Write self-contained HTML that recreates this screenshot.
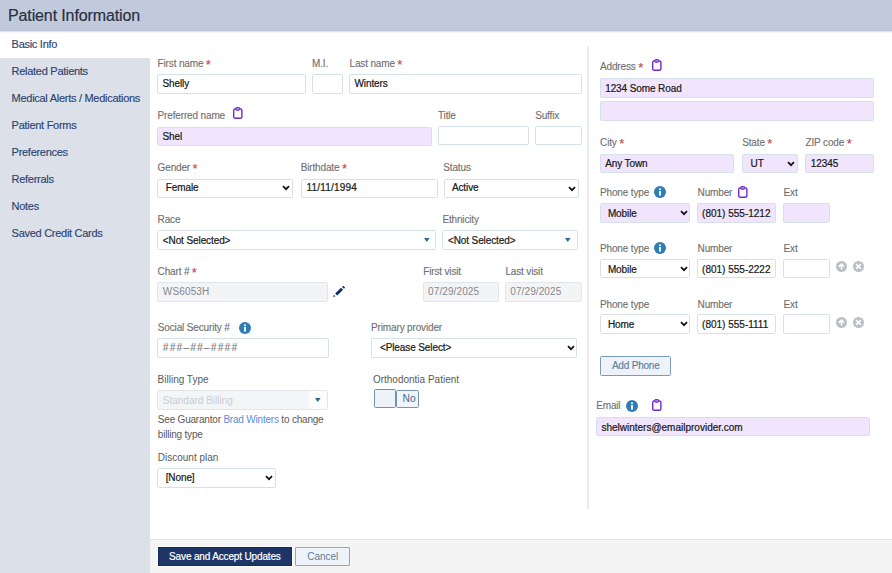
<!DOCTYPE html>
<html><head><meta charset="utf-8"><style>
html,body{margin:0;padding:0;width:892px;height:573px;overflow:hidden;background:#fff;}
body{position:relative;font-family:"Liberation Sans",sans-serif;}
.t{position:absolute;white-space:nowrap;}
.b{position:absolute;box-sizing:border-box;}
</style></head><body>
<div class="b" style="left:0.0px;top:0.0px;width:892.0px;height:31.0px;background:#c1cadc;"></div>
<div class="t" style="left:8.0px;top:7.76px;font-size:16px;line-height:16px;color:#293043;letter-spacing:-0.12px;-webkit-text-stroke:0.2px #293043;">Patient Information</div>
<div class="b" style="left:0.0px;top:31.0px;width:150.0px;height:542.0px;background:#dbe0e9;"></div>
<div class="b" style="left:0.0px;top:31.0px;width:150.0px;height:27.0px;background:#ffffff;"></div>
<div class="t" style="left:11.6px;top:38.89px;font-size:11px;line-height:11px;color:#2d4370;letter-spacing:-0.28px;-webkit-text-stroke:0.15px #2d4370;">Basic Info</div>
<div class="t" style="left:11.6px;top:65.89px;font-size:11px;line-height:11px;color:#2d4370;letter-spacing:-0.28px;-webkit-text-stroke:0.15px #2d4370;">Related Patients</div>
<div class="t" style="left:11.6px;top:92.89px;font-size:11px;line-height:11px;color:#2d4370;letter-spacing:-0.28px;-webkit-text-stroke:0.15px #2d4370;">Medical Alerts / Medications</div>
<div class="t" style="left:11.6px;top:119.89px;font-size:11px;line-height:11px;color:#2d4370;letter-spacing:-0.28px;-webkit-text-stroke:0.15px #2d4370;">Patient Forms</div>
<div class="t" style="left:11.6px;top:146.89px;font-size:11px;line-height:11px;color:#2d4370;letter-spacing:-0.28px;-webkit-text-stroke:0.15px #2d4370;">Preferences</div>
<div class="t" style="left:11.6px;top:173.89px;font-size:11px;line-height:11px;color:#2d4370;letter-spacing:-0.28px;-webkit-text-stroke:0.15px #2d4370;">Referrals</div>
<div class="t" style="left:11.6px;top:200.89px;font-size:11px;line-height:11px;color:#2d4370;letter-spacing:-0.28px;-webkit-text-stroke:0.15px #2d4370;">Notes</div>
<div class="t" style="left:11.6px;top:227.89px;font-size:11px;line-height:11px;color:#2d4370;letter-spacing:-0.28px;-webkit-text-stroke:0.15px #2d4370;">Saved Credit Cards</div>
<div class="b" style="left:150.0px;top:31.0px;width:742.0px;height:508.0px;background:#ffffff;"></div>
<div class="b" style="left:0.0px;top:30.0px;width:892.0px;height:1.0px;background:#bac4d6;"></div>
<div class="b" style="left:0.0px;top:31.0px;width:892.0px;height:1.0px;background:#dfe3eb;"></div>
<div class="b" style="left:0.0px;top:32.0px;width:892.0px;height:1.0px;background:#f6f7fa;"></div>
<div class="b" style="left:150.0px;top:539.0px;width:742.0px;height:34.0px;background:#f4f4f4;border-top:1px solid #e1e3e7;"></div>
<div class="b" style="left:587.0px;top:46.0px;width:2.0px;height:463.0px;background:#ececec;"></div>
<div class="t" style="left:157.6px;top:58.53px;font-size:10px;line-height:10px;color:#6f6f6f;letter-spacing:-0.15px;-webkit-text-stroke:0.12px #6f6f6f;">First name<span style="color:#e03c3c;font-size:13px;margin-left:2.5px;line-height:0;position:relative;top:2px">*</span></div>
<div class="t" style="left:312.0px;top:58.53px;font-size:10px;line-height:10px;color:#6f6f6f;letter-spacing:-0.15px;-webkit-text-stroke:0.12px #6f6f6f;">M.I.</div>
<div class="t" style="left:349.5px;top:58.53px;font-size:10px;line-height:10px;color:#6f6f6f;letter-spacing:-0.15px;-webkit-text-stroke:0.12px #6f6f6f;">Last name<span style="color:#e03c3c;font-size:13px;margin-left:2.5px;line-height:0;position:relative;top:2px">*</span></div>
<div class="b" style="left:157.0px;top:74.0px;width:149.0px;height:20.0px;background:#fff;border:1px solid #d5e0ea;border-radius:1.5px;"></div>
<div class="b" style="left:312.0px;top:74.0px;width:31.0px;height:20.0px;background:#fff;border:1px solid #d5e0ea;border-radius:1.5px;"></div>
<div class="b" style="left:349.0px;top:74.0px;width:233.0px;height:20.0px;background:#fff;border:1px solid #d5e0ea;border-radius:1.5px;"></div>
<div class="t" style="left:162.4px;top:78.73px;font-size:10px;line-height:10px;color:#1a1a1a;letter-spacing:-0.1px;-webkit-text-stroke:0.22px #1a1a1a;">Shelly</div>
<div class="t" style="left:354.5px;top:78.73px;font-size:10px;line-height:10px;color:#1a1a1a;letter-spacing:-0.1px;-webkit-text-stroke:0.22px #1a1a1a;">Winters</div>
<div class="t" style="left:157.6px;top:110.53px;font-size:10px;line-height:10px;color:#6f6f6f;letter-spacing:-0.15px;-webkit-text-stroke:0.12px #6f6f6f;">Preferred name</div>
<svg class="b" style="left:232.9px;top:107.2px" width="11" height="13" viewBox="0 0 11 13"><rect x="0.7" y="1.9" width="8.2" height="9.4" rx="1.6" fill="none" stroke="#6e28d0" stroke-width="1.4"/><rect x="2.4" y="0.5" width="4.6" height="2.8" rx="1.4" fill="#a27ae0" stroke="#6e28d0" stroke-width="1"/></svg>
<div class="t" style="left:438.0px;top:110.53px;font-size:10px;line-height:10px;color:#6f6f6f;letter-spacing:-0.15px;-webkit-text-stroke:0.12px #6f6f6f;">Title</div>
<div class="t" style="left:535.2px;top:110.53px;font-size:10px;line-height:10px;color:#6f6f6f;letter-spacing:-0.15px;-webkit-text-stroke:0.12px #6f6f6f;">Suffix</div>
<div class="b" style="left:157.0px;top:127.0px;width:275.0px;height:19.0px;background:#f1e5fd;border:1px solid #d5e0ea;border-radius:1.5px;"></div>
<div class="b" style="left:438.0px;top:126.2px;width:91.0px;height:19.2px;background:#fff;border:1px solid #d5e0ea;border-radius:1.5px;"></div>
<div class="b" style="left:535.0px;top:126.2px;width:47.0px;height:19.2px;background:#fff;border:1px solid #d5e0ea;border-radius:1.5px;"></div>
<div class="t" style="left:162.4px;top:131.73px;font-size:10px;line-height:10px;color:#1a1a1a;letter-spacing:-0.1px;-webkit-text-stroke:0.22px #1a1a1a;">Shel</div>
<div class="t" style="left:157.6px;top:162.53px;font-size:10px;line-height:10px;color:#6f6f6f;letter-spacing:-0.15px;-webkit-text-stroke:0.12px #6f6f6f;">Gender<span style="color:#e03c3c;font-size:13px;margin-left:2.5px;line-height:0;position:relative;top:2px">*</span></div>
<div class="t" style="left:300.7px;top:162.53px;font-size:10px;line-height:10px;color:#6f6f6f;letter-spacing:-0.15px;-webkit-text-stroke:0.12px #6f6f6f;">Birthdate<span style="color:#e03c3c;font-size:13px;margin-left:2.5px;line-height:0;position:relative;top:2px">*</span></div>
<div class="t" style="left:443.3px;top:162.53px;font-size:10px;line-height:10px;color:#6f6f6f;letter-spacing:-0.15px;-webkit-text-stroke:0.12px #6f6f6f;">Status</div>
<div class="b" style="left:157.0px;top:178.5px;width:136.0px;height:19.5px;background:#fff;border:1px solid #d5e0ea;border-radius:1.5px;"></div>
<div class="b" style="left:300.7px;top:178.5px;width:136.9px;height:19.5px;background:#fff;border:1px solid #d5e0ea;border-radius:1.5px;"></div>
<div class="b" style="left:443.7px;top:178.5px;width:135.0px;height:19.5px;background:#fff;border:1px solid #d5e0ea;border-radius:1.5px;"></div>
<div class="t" style="left:165.8px;top:182.94px;font-size:10px;line-height:10px;color:#1a1a1a;letter-spacing:-0.1px;-webkit-text-stroke:0.22px #1a1a1a;">Female</div>
<svg class="b" style="left:282.2px;top:185.3px" width="8" height="6" viewBox="0 0 8 6"><path d="M1 1.2 L4 4.2 L7 1.2" fill="none" stroke="#111" stroke-width="1.7"/></svg>
<div class="t" style="left:306.4px;top:182.94px;font-size:10px;line-height:10px;color:#1a1a1a;letter-spacing:-0.1px;-webkit-text-stroke:0.22px #1a1a1a;letter-spacing:0.2px;">11/11/1994</div>
<div class="t" style="left:451.9px;top:182.94px;font-size:10px;line-height:10px;color:#1a1a1a;letter-spacing:-0.1px;-webkit-text-stroke:0.22px #1a1a1a;">Active</div>
<svg class="b" style="left:568.0px;top:185.5px" width="8" height="6" viewBox="0 0 8 6"><path d="M1 1.2 L4 4.2 L7 1.2" fill="none" stroke="#111" stroke-width="1.7"/></svg>
<div class="t" style="left:157.6px;top:214.53px;font-size:10px;line-height:10px;color:#6f6f6f;letter-spacing:-0.15px;-webkit-text-stroke:0.12px #6f6f6f;">Race</div>
<div class="t" style="left:442.4px;top:214.53px;font-size:10px;line-height:10px;color:#6f6f6f;letter-spacing:-0.15px;-webkit-text-stroke:0.12px #6f6f6f;">Ethnicity</div>
<div class="b" style="left:157.0px;top:230.2px;width:279.0px;height:19.8px;background:#fff;border:1px solid #d5e0ea;border-radius:1.5px;"></div>
<div class="b" style="left:442.4px;top:230.2px;width:135.6px;height:19.8px;background:#fff;border:1px solid #d5e0ea;border-radius:1.5px;"></div>
<div class="t" style="left:162.8px;top:235.53px;font-size:10px;line-height:10px;color:#1a1a1a;letter-spacing:-0.1px;-webkit-text-stroke:0.22px #1a1a1a;">&lt;Not Selected&gt;</div>
<svg class="b" style="left:423.9px;top:238.3px" width="6" height="4" viewBox="0 0 6 4"><path d="M0 0 L5.6 0 L2.8 3.9 Z" fill="#2c6a93"/></svg>
<div class="t" style="left:447.9px;top:235.53px;font-size:10px;line-height:10px;color:#1a1a1a;letter-spacing:-0.1px;-webkit-text-stroke:0.22px #1a1a1a;">&lt;Not Selected&gt;</div>
<svg class="b" style="left:565.4px;top:238.3px" width="6" height="4" viewBox="0 0 6 4"><path d="M0 0 L5.6 0 L2.8 3.9 Z" fill="#2c6a93"/></svg>
<div class="t" style="left:157.6px;top:266.54px;font-size:10px;line-height:10px;color:#6f6f6f;letter-spacing:-0.15px;-webkit-text-stroke:0.12px #6f6f6f;">Chart #<span style="color:#e03c3c;font-size:13px;margin-left:2.5px;line-height:0;position:relative;top:2px">*</span></div>
<div class="t" style="left:423.2px;top:266.54px;font-size:10px;line-height:10px;color:#6f6f6f;letter-spacing:-0.15px;-webkit-text-stroke:0.12px #6f6f6f;">First visit</div>
<div class="t" style="left:505.4px;top:266.54px;font-size:10px;line-height:10px;color:#6f6f6f;letter-spacing:-0.15px;-webkit-text-stroke:0.12px #6f6f6f;">Last visit</div>
<div class="b" style="left:157.0px;top:282.2px;width:171.0px;height:19.6px;background:#f3f4f6;border:1px solid #e2e5e9;border-radius:1.5px;"></div>
<svg class="b" style="left:333.2px;top:285.6px" width="12" height="11" viewBox="0 0 12 11"><path d="M3.2 8.6 L9.0 2.8" stroke="#0e2b68" stroke-width="2.8"/><path d="M10.0 1.8 L11.2 0.6" stroke="#0e2b68" stroke-width="2.6"/><path d="M0.2 11 L0.9 8.7 L2.5 10.3 Z" fill="#0e2b68"/></svg>
<div class="b" style="left:423.0px;top:282.2px;width:76.0px;height:19.6px;background:#f3f4f6;border:1px solid #e2e5e9;border-radius:1.5px;"></div>
<div class="b" style="left:505.4px;top:282.2px;width:76.3px;height:19.6px;background:#f3f4f6;border:1px solid #e2e5e9;border-radius:1.5px;"></div>
<div class="t" style="left:162.8px;top:286.84px;font-size:10px;line-height:10px;color:#85888d;letter-spacing:0.15px;">WS6053H</div>
<div class="t" style="left:428.1px;top:287.34px;font-size:10px;line-height:10px;color:#85888d;letter-spacing:0.1px;">07/29/2025</div>
<div class="t" style="left:510.3px;top:287.34px;font-size:10px;line-height:10px;color:#85888d;letter-spacing:0.1px;">07/29/2025</div>
<div class="t" style="left:157.8px;top:322.54px;font-size:10px;line-height:10px;color:#6f6f6f;letter-spacing:-0.15px;-webkit-text-stroke:0.12px #6f6f6f;">Social Security #</div>
<svg class="b" style="left:239.2px;top:322.4px" width="12" height="12" viewBox="0 0 12 12"><circle cx="6" cy="6" r="6" fill="#2f7db3"/><rect x="5.1" y="5" width="1.8" height="4.6" fill="#fff"/><circle cx="6" cy="3.2" r="1" fill="#fff"/></svg>
<div class="t" style="left:371.1px;top:322.84px;font-size:10px;line-height:10px;color:#6f6f6f;letter-spacing:-0.15px;-webkit-text-stroke:0.12px #6f6f6f;">Primary provider</div>
<div class="b" style="left:157.2px;top:338.2px;width:171.6px;height:19.4px;background:#fff;border:1px solid #d5e0ea;border-radius:1.5px;"></div>
<div class="b" style="left:371.1px;top:338.2px;width:206.1px;height:19.5px;background:#fff;border:1px solid #d5e0ea;border-radius:1.5px;"></div>
<div class="t" style="left:162.8px;top:343.14px;font-size:10px;line-height:10px;color:#7c7c7c;font-style:italic;letter-spacing:1.3px;-webkit-text-stroke:0.15px #7c7c7c;">###&#8211;##&#8211;####</div>
<div class="t" style="left:379.9px;top:343.24px;font-size:10px;line-height:10px;color:#1a1a1a;letter-spacing:-0.1px;-webkit-text-stroke:0.22px #1a1a1a;">&lt;Please Select&gt;</div>
<svg class="b" style="left:566.7px;top:345.3px" width="8" height="6" viewBox="0 0 8 6"><path d="M1 1.2 L4 4.2 L7 1.2" fill="none" stroke="#111" stroke-width="1.7"/></svg>
<div class="t" style="left:157.6px;top:375.34px;font-size:10px;line-height:10px;color:#5a5a5a;">Billing Type</div>
<div class="t" style="left:372.9px;top:374.84px;font-size:10px;line-height:10px;color:#5a5a5a;">Orthodontia Patient</div>
<div class="b" style="left:157.2px;top:390.2px;width:170.7px;height:19.5px;background:#f3f5f7;border:1px solid #e2e5e9;border-radius:1.5px;"></div>
<div class="b" style="left:308.7px;top:391.2px;width:18.2px;height:17.5px;background:#fdfdfe;"></div>
<svg class="b" style="left:315.0px;top:398.2px" width="6" height="4" viewBox="0 0 6 4"><path d="M0 0 L5.6 0 L2.8 3.9 Z" fill="#2c6a93"/></svg>
<div class="t" style="left:162.8px;top:396.14px;font-size:10px;line-height:10px;color:#c9cdd2;">Standard Billing</div>
<div class="b" style="left:395.8px;top:390.2px;width:23.0px;height:17.4px;background:#f1f4fa;border:1px solid #7396b0;border-radius:1.5px;border-radius:1.5px;"></div>
<div class="b" style="left:374.2px;top:389.2px;width:22.1px;height:19.3px;background:#eef2f9;border:1px solid #6f93ad;border-radius:1.5px;border-radius:1.5px;"></div>
<div class="t" style="left:402.5px;top:393.94px;font-size:10px;line-height:10px;color:#46698a;font-size:10.3px;">No</div>
<div class="t" style="left:157.8px;top:414.54px;font-size:10px;line-height:10px;color:#585858;letter-spacing:-0.2px">See Guarantor <span style="color:#5a8ee0">Brad Winters</span> to change</div>
<div class="t" style="left:157.8px;top:429.54px;font-size:10px;line-height:10px;color:#585858;letter-spacing:-0.2px">billing type</div>
<div class="t" style="left:157.8px;top:453.24px;font-size:10px;line-height:10px;color:#5a5a5a;">Discount plan</div>
<div class="b" style="left:157.2px;top:468.0px;width:118.4px;height:19.8px;background:#fff;border:1px solid #d5e0ea;border-radius:1.5px;"></div>
<div class="t" style="left:165.7px;top:472.84px;font-size:10px;line-height:10px;color:#1a1a1a;letter-spacing:-0.1px;-webkit-text-stroke:0.22px #1a1a1a;">[None]</div>
<svg class="b" style="left:265.0px;top:474.5px" width="8" height="6" viewBox="0 0 8 6"><path d="M1 1.2 L4 4.2 L7 1.2" fill="none" stroke="#111" stroke-width="1.7"/></svg>
<div class="t" style="left:600.0px;top:62.13px;font-size:10px;line-height:10px;color:#6f6f6f;letter-spacing:-0.15px;-webkit-text-stroke:0.12px #6f6f6f;">Address<span style="color:#e03c3c;font-size:13px;margin-left:2.5px;line-height:0;position:relative;top:2px">*</span></div>
<svg class="b" style="left:651.8px;top:59.2px" width="11" height="13" viewBox="0 0 11 13"><rect x="0.7" y="1.9" width="8.2" height="9.4" rx="1.6" fill="none" stroke="#6e28d0" stroke-width="1.4"/><rect x="2.4" y="0.5" width="4.6" height="2.8" rx="1.4" fill="#a27ae0" stroke="#6e28d0" stroke-width="1"/></svg>
<div class="b" style="left:599.8px;top:78.0px;width:274.0px;height:20.0px;background:#f1e5fd;border:1px solid #d5e0ea;border-radius:1.5px;"></div>
<div class="b" style="left:599.8px;top:101.0px;width:274.0px;height:20.0px;background:#f1e5fd;border:1px solid #d5e0ea;border-radius:1.5px;"></div>
<div class="t" style="left:605.2px;top:83.53px;font-size:10px;line-height:10px;color:#1a1a1a;letter-spacing:-0.1px;-webkit-text-stroke:0.22px #1a1a1a;">1234 Some Road</div>
<div class="t" style="left:600.1px;top:138.23px;font-size:10px;line-height:10px;color:#6f6f6f;letter-spacing:-0.15px;-webkit-text-stroke:0.12px #6f6f6f;">City<span style="color:#e03c3c;font-size:13px;margin-left:2.5px;line-height:0;position:relative;top:2px">*</span></div>
<div class="t" style="left:742.2px;top:138.03px;font-size:10px;line-height:10px;color:#6f6f6f;letter-spacing:-0.15px;-webkit-text-stroke:0.12px #6f6f6f;">State<span style="color:#e03c3c;font-size:13px;margin-left:2.5px;line-height:0;position:relative;top:2px">*</span></div>
<div class="t" style="left:805.5px;top:138.03px;font-size:10px;line-height:10px;color:#6f6f6f;letter-spacing:-0.15px;-webkit-text-stroke:0.12px #6f6f6f;">ZIP code<span style="color:#e03c3c;font-size:13px;margin-left:2.5px;line-height:0;position:relative;top:2px">*</span></div>
<div class="b" style="left:600.0px;top:154.0px;width:134.4px;height:18.8px;background:#f1e5fd;border:1px solid #d5e0ea;border-radius:1.5px;"></div>
<div class="b" style="left:742.2px;top:154.0px;width:55.4px;height:18.8px;background:#f1e5fd;border:1px solid #d5e0ea;border-radius:1.5px;"></div>
<div class="b" style="left:805.1px;top:154.0px;width:68.7px;height:18.8px;background:#f1e5fd;border:1px solid #d5e0ea;border-radius:1.5px;"></div>
<div class="t" style="left:605.2px;top:158.63px;font-size:10px;line-height:10px;color:#1a1a1a;letter-spacing:-0.1px;-webkit-text-stroke:0.22px #1a1a1a;">Any Town</div>
<div class="t" style="left:750.6px;top:158.73px;font-size:10px;line-height:10px;color:#1a1a1a;letter-spacing:-0.1px;-webkit-text-stroke:0.22px #1a1a1a;">UT</div>
<svg class="b" style="left:786.8px;top:160.8px" width="8" height="6" viewBox="0 0 8 6"><path d="M1 1.2 L4 4.2 L7 1.2" fill="none" stroke="#111" stroke-width="1.7"/></svg>
<div class="t" style="left:810.8px;top:158.73px;font-size:10px;line-height:10px;color:#1a1a1a;letter-spacing:-0.1px;-webkit-text-stroke:0.22px #1a1a1a;">12345</div>
<div class="t" style="left:600.0px;top:187.63px;font-size:10px;line-height:10px;color:#6f6f6f;letter-spacing:-0.15px;-webkit-text-stroke:0.12px #6f6f6f;">Phone type</div>
<svg class="b" style="left:654.3px;top:185.9px" width="12" height="12" viewBox="0 0 12 12"><circle cx="6" cy="6" r="6" fill="#2f7db3"/><rect x="5.1" y="5" width="1.8" height="4.6" fill="#fff"/><circle cx="6" cy="3.2" r="1" fill="#fff"/></svg>
<div class="t" style="left:697.6px;top:187.63px;font-size:10px;line-height:10px;color:#6f6f6f;letter-spacing:-0.15px;-webkit-text-stroke:0.12px #6f6f6f;">Number</div>
<svg class="b" style="left:738.4px;top:185.6px" width="11" height="13" viewBox="0 0 11 13"><rect x="0.7" y="1.9" width="8.2" height="9.4" rx="1.6" fill="none" stroke="#6e28d0" stroke-width="1.4"/><rect x="2.4" y="0.5" width="4.6" height="2.8" rx="1.4" fill="#a27ae0" stroke="#6e28d0" stroke-width="1"/></svg>
<div class="t" style="left:783.6px;top:187.63px;font-size:10px;line-height:10px;color:#6f6f6f;letter-spacing:-0.15px;-webkit-text-stroke:0.12px #6f6f6f;">Ext</div>
<div class="b" style="left:600.0px;top:203.2px;width:90.2px;height:19.5px;background:#f1e5fd;border:1px solid #d5e0ea;border-radius:1.5px;"></div>
<div class="b" style="left:697.1px;top:203.2px;width:78.7px;height:19.5px;background:#f1e5fd;border:1px solid #d5e0ea;border-radius:1.5px;"></div>
<div class="b" style="left:783.1px;top:203.2px;width:46.6px;height:19.5px;background:#f1e5fd;border:1px solid #d5e0ea;border-radius:1.5px;"></div>
<div class="t" style="left:607.9px;top:208.53px;font-size:10px;line-height:10px;color:#1a1a1a;letter-spacing:-0.1px;-webkit-text-stroke:0.22px #1a1a1a;">Mobile</div>
<svg class="b" style="left:679.6px;top:210.4px" width="8" height="6" viewBox="0 0 8 6"><path d="M1 1.2 L4 4.2 L7 1.2" fill="none" stroke="#111" stroke-width="1.7"/></svg>
<div class="t" style="left:702.1px;top:208.53px;font-size:10px;line-height:10px;color:#1a1a1a;letter-spacing:-0.1px;-webkit-text-stroke:0.22px #1a1a1a;letter-spacing:0px;">(801) 555-1212</div>
<div class="t" style="left:600.0px;top:243.73px;font-size:10px;line-height:10px;color:#6f6f6f;letter-spacing:-0.15px;-webkit-text-stroke:0.12px #6f6f6f;">Phone type</div>
<svg class="b" style="left:654.3px;top:242.0px" width="12" height="12" viewBox="0 0 12 12"><circle cx="6" cy="6" r="6" fill="#2f7db3"/><rect x="5.1" y="5" width="1.8" height="4.6" fill="#fff"/><circle cx="6" cy="3.2" r="1" fill="#fff"/></svg>
<div class="t" style="left:697.6px;top:243.73px;font-size:10px;line-height:10px;color:#6f6f6f;letter-spacing:-0.15px;-webkit-text-stroke:0.12px #6f6f6f;">Number</div>
<div class="t" style="left:783.6px;top:243.73px;font-size:10px;line-height:10px;color:#6f6f6f;letter-spacing:-0.15px;-webkit-text-stroke:0.12px #6f6f6f;">Ext</div>
<div class="b" style="left:600.0px;top:258.8px;width:90.2px;height:19.6px;background:#fff;border:1px solid #d5e0ea;border-radius:1.5px;"></div>
<div class="b" style="left:697.1px;top:258.8px;width:78.7px;height:19.6px;background:#fff;border:1px solid #d5e0ea;border-radius:1.5px;"></div>
<div class="b" style="left:783.1px;top:258.8px;width:46.6px;height:19.6px;background:#fff;border:1px solid #d5e0ea;border-radius:1.5px;"></div>
<div class="t" style="left:607.9px;top:265.14px;font-size:10px;line-height:10px;color:#1a1a1a;letter-spacing:-0.1px;-webkit-text-stroke:0.22px #1a1a1a;">Mobile</div>
<svg class="b" style="left:679.6px;top:266.0px" width="8" height="6" viewBox="0 0 8 6"><path d="M1 1.2 L4 4.2 L7 1.2" fill="none" stroke="#111" stroke-width="1.7"/></svg>
<div class="t" style="left:702.1px;top:265.14px;font-size:10px;line-height:10px;color:#1a1a1a;letter-spacing:-0.1px;-webkit-text-stroke:0.22px #1a1a1a;letter-spacing:0px;">(801) 555-2222</div>
<svg class="b" style="left:835.8px;top:261.2px" width="11" height="11" viewBox="0 0 11 11"><circle cx="5.5" cy="5.5" r="5.5" fill="#bcc0c4"/><path d="M5.5 8.6 V3.2 M2.9 5.6 L5.5 3 L8.1 5.6" fill="none" stroke="#fff" stroke-width="1.5"/></svg>
<svg class="b" style="left:852.6px;top:261.2px" width="11" height="11" viewBox="0 0 11 11"><circle cx="5.5" cy="5.5" r="5.5" fill="#bcc0c4"/><path d="M3.1 3.1 L7.9 7.9 M7.9 3.1 L3.1 7.9" fill="none" stroke="#fff" stroke-width="1.5"/></svg>
<div class="t" style="left:600.0px;top:299.64px;font-size:10px;line-height:10px;color:#6f6f6f;letter-spacing:-0.15px;-webkit-text-stroke:0.12px #6f6f6f;">Phone type</div>
<div class="t" style="left:697.6px;top:299.64px;font-size:10px;line-height:10px;color:#6f6f6f;letter-spacing:-0.15px;-webkit-text-stroke:0.12px #6f6f6f;">Number</div>
<div class="t" style="left:783.6px;top:299.64px;font-size:10px;line-height:10px;color:#6f6f6f;letter-spacing:-0.15px;-webkit-text-stroke:0.12px #6f6f6f;">Ext</div>
<div class="b" style="left:600.0px;top:314.1px;width:90.2px;height:19.6px;background:#fff;border:1px solid #d5e0ea;border-radius:1.5px;"></div>
<div class="b" style="left:697.1px;top:314.1px;width:78.7px;height:19.6px;background:#fff;border:1px solid #d5e0ea;border-radius:1.5px;"></div>
<div class="b" style="left:783.1px;top:314.1px;width:46.6px;height:19.6px;background:#fff;border:1px solid #d5e0ea;border-radius:1.5px;"></div>
<div class="t" style="left:607.9px;top:320.04px;font-size:10px;line-height:10px;color:#1a1a1a;letter-spacing:-0.1px;-webkit-text-stroke:0.22px #1a1a1a;">Home</div>
<svg class="b" style="left:679.6px;top:321.3px" width="8" height="6" viewBox="0 0 8 6"><path d="M1 1.2 L4 4.2 L7 1.2" fill="none" stroke="#111" stroke-width="1.7"/></svg>
<div class="t" style="left:702.1px;top:320.04px;font-size:10px;line-height:10px;color:#1a1a1a;letter-spacing:-0.1px;-webkit-text-stroke:0.22px #1a1a1a;letter-spacing:0px;">(801) 555-1111</div>
<svg class="b" style="left:835.8px;top:316.5px" width="11" height="11" viewBox="0 0 11 11"><circle cx="5.5" cy="5.5" r="5.5" fill="#bcc0c4"/><path d="M5.5 8.6 V3.2 M2.9 5.6 L5.5 3 L8.1 5.6" fill="none" stroke="#fff" stroke-width="1.5"/></svg>
<svg class="b" style="left:852.6px;top:316.5px" width="11" height="11" viewBox="0 0 11 11"><circle cx="5.5" cy="5.5" r="5.5" fill="#bcc0c4"/><path d="M3.1 3.1 L7.9 7.9 M7.9 3.1 L3.1 7.9" fill="none" stroke="#fff" stroke-width="1.5"/></svg>
<div class="b" style="left:599.6px;top:356.1px;width:71.3px;height:19.7px;background:#eef2fa;border:1px solid #7b9ab6;border-radius:1.5px;"></div>
<div class="t" style="left:611.9px;top:360.94px;font-size:10px;line-height:10px;color:#5f7e9c;letter-spacing:-0.2px;-webkit-text-stroke:0.15px #5f7e9c;">Add Phone</div>
<div class="t" style="left:596.2px;top:400.94px;font-size:10px;line-height:10px;color:#6f6f6f;letter-spacing:-0.15px;-webkit-text-stroke:0.12px #6f6f6f;">Email</div>
<svg class="b" style="left:625.8px;top:400.0px" width="12" height="12" viewBox="0 0 12 12"><circle cx="6" cy="6" r="6" fill="#2f7db3"/><rect x="5.1" y="5" width="1.8" height="4.6" fill="#fff"/><circle cx="6" cy="3.2" r="1" fill="#fff"/></svg>
<svg class="b" style="left:652.3px;top:398.9px" width="11" height="13" viewBox="0 0 11 13"><rect x="0.7" y="1.9" width="8.2" height="9.4" rx="1.6" fill="none" stroke="#6e28d0" stroke-width="1.4"/><rect x="2.4" y="0.5" width="4.6" height="2.8" rx="1.4" fill="#a27ae0" stroke="#6e28d0" stroke-width="1"/></svg>
<div class="b" style="left:596.2px;top:417.0px;width:273.7px;height:18.9px;background:#f1e5fd;border:1px solid #d5e0ea;border-radius:1.5px;"></div>
<div class="t" style="left:601.4px;top:422.54px;font-size:10px;line-height:10px;color:#1a1a1a;letter-spacing:-0.1px;-webkit-text-stroke:0.22px #1a1a1a;letter-spacing:0px;">shelwinters@emailprovider.com</div>
<div class="b" style="left:157.6px;top:546.8px;width:134.6px;height:19.2px;background:#1d3567;border:1px solid #122b5d;border-radius:1.5px;border-radius:0;box-shadow:0 0 0 1px #fff;"></div>
<div class="t" style="left:169.1px;top:552.13px;font-size:10px;line-height:10px;color:#ffffff;letter-spacing:-0.15px;-webkit-text-stroke:0.2px #fff;">Save and Accept Updates</div>
<div class="b" style="left:295.4px;top:546.8px;width:54.2px;height:19.2px;background:#eef3fa;border:1px solid #8fa8c0;border-radius:1.5px;border-radius:1px;"></div>
<div class="t" style="left:307.2px;top:552.13px;font-size:10px;line-height:10px;color:#5f7b97;">Cancel</div>
</body></html>
